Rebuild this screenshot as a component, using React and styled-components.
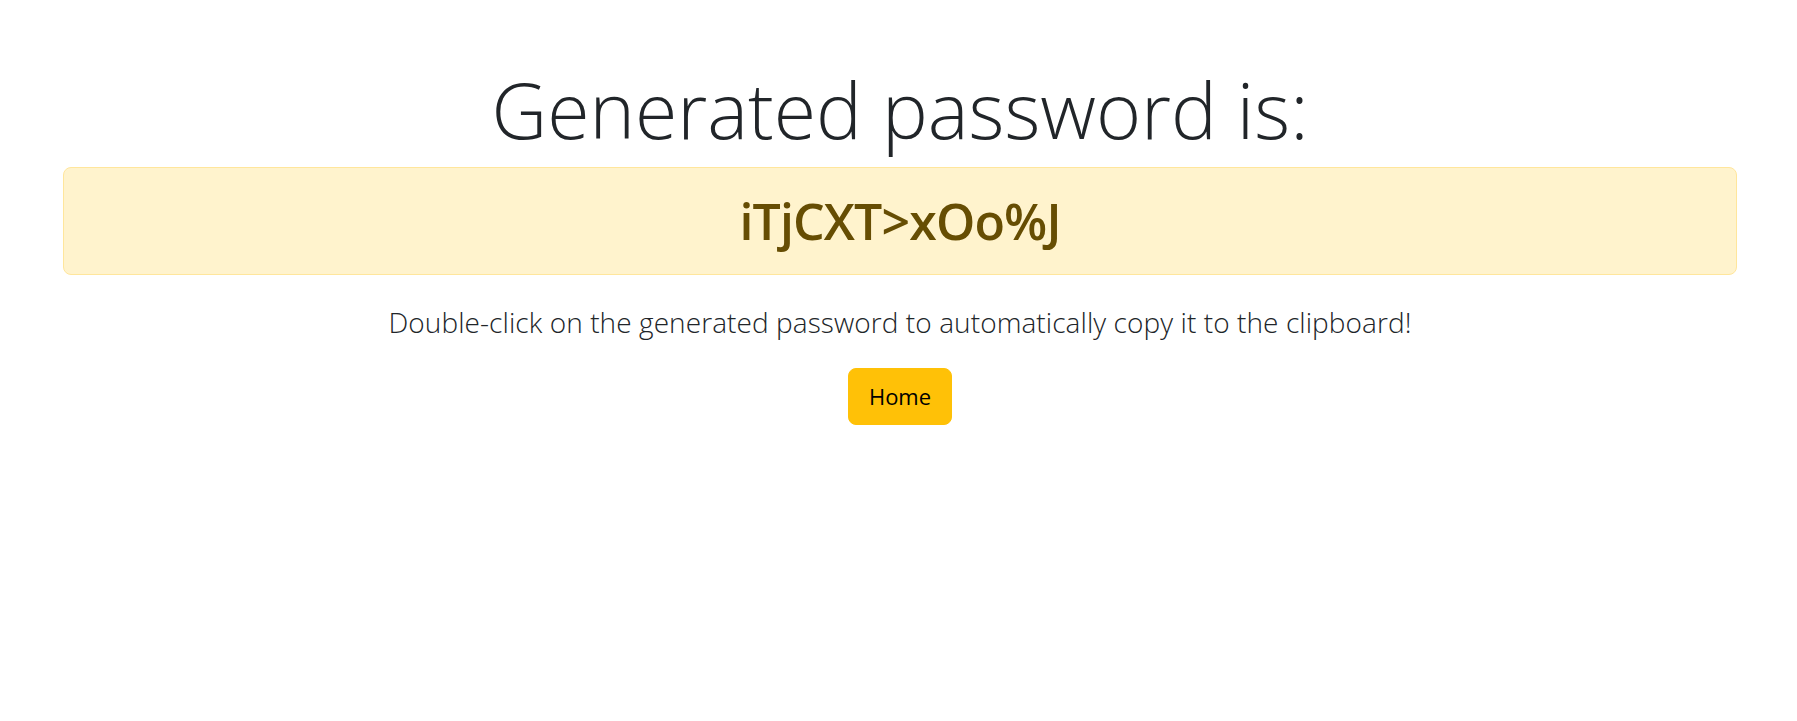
import React from "react";
import styled, { createGlobalStyle } from "styled-components";

const Global = createGlobalStyle`
  html, body {
    margin: 0;
    padding: 0;
    background: #ffffff;
  }
  body {
    font-family: "Open Sans", "Noto Sans", "Liberation Sans", sans-serif;
    color: #212529;
  }
`;

const Page = styled.main`
  display: flex;
  flex-direction: column;
  align-items: center;
  padding: 64px 60px 0 63px;
  text-align: center;
`;

const Title = styled.h1`
  margin: 0 0 11px;
  font-size: 77px;
  line-height: 92px;
  font-weight: 300;
  color: #212529;
`;

const Alert = styled.div`
  box-sizing: border-box;
  align-self: stretch;
  padding: 24px 16px;
  background: #fff3cd;
  border: 1px solid #ffe69c;
  border-radius: 8px;
`;

const Password = styled.h2`
  margin: 0;
  font-size: 50px;
  line-height: 58px;
  font-weight: 600;
  letter-spacing: -0.85px;
  color: #664d03;
  user-select: all;
`;

const Lead = styled.p`
  margin: 29px 0 0;
  font-size: 28px;
  line-height: 36px;
  font-weight: 300;
  letter-spacing: 0.08px;
  color: #212529;
`;

const Button = styled.a`
  margin-top: 28px;
  display: inline-block;
  padding: 11px 20px;
  font-size: 22px;
  line-height: 33px;
  font-weight: 400;
  color: #000;
  background: #ffc107;
  border: 1px solid #ffc107;
  border-radius: 8px;
  text-decoration: none;
  cursor: pointer;
`;

export default function App() {
  return (
    <>
      <Global />
      <Page>
        <Title>Generated password is:</Title>
        <Alert>
          <Password>iTjCXT&gt;xOo%J</Password>
        </Alert>
        <Lead>Double-click on the generated password to automatically copy it to the clipboard!</Lead>
        <Button href="#">Home</Button>
      </Page>
    </>
  );
}
